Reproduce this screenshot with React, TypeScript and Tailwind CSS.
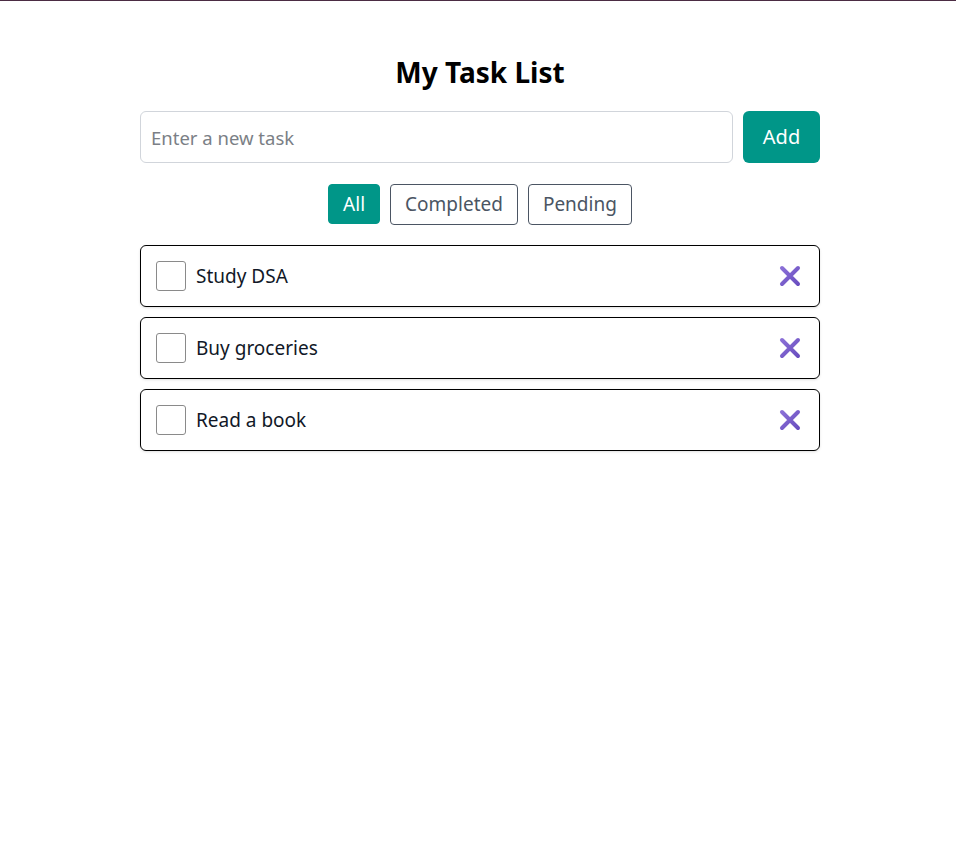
import { useState } from "react";

type Task = { id: number; text: string; done: boolean };

const initial: Task[] = [
  { id: 1, text: "Study DSA", done: false },
  { id: 2, text: "Buy groceries", done: false },
  { id: 3, text: "Read a book", done: false },
];

function CrossIcon() {
  return (
    <svg width="22" height="22" viewBox="0 0 22 22">
      <defs>
        <linearGradient id="xg" x1="0" y1="0" x2="1" y2="1">
          <stop offset="0" stopColor="#8a6fd6" />
          <stop offset="1" stopColor="#6a4fc0" />
        </linearGradient>
      </defs>
      <path d="M3 3 L19 19 M19 3 L3 19" stroke="url(#xg)" strokeWidth="4" strokeLinecap="round" />
    </svg>
  );
}

export default function App() {
  const [tasks, setTasks] = useState<Task[]>(initial);
  const [filter, setFilter] = useState("All");
  const [text, setText] = useState("");

  const shown = tasks.filter((t) =>
    filter === "All" ? true : filter === "Completed" ? t.done : !t.done
  );

  const add = () => {
    if (!text.trim()) return;
    setTasks([...tasks, { id: Date.now(), text: text.trim(), done: false }]);
    setText("");
  };

  return (
    <div className="min-h-screen bg-white text-[#111827]" style={{ fontFamily: '"Noto Sans", "Open Sans", sans-serif' }}>
      <div className="h-px bg-[#4b2c43]" />
      <div className="pl-[4px]">
        <div className="mx-auto w-[680px] pt-[53px]">
          <h1 className="text-center text-[28px] font-bold leading-[36px] text-black">My Task List</h1>

          <div className="mt-[21px] flex gap-[10px]">
            <input
              value={text}
              onChange={(e) => setText(e.target.value)}
              placeholder="Enter a new task"
              className="h-[52px] flex-1 rounded-md border border-[#d1d5db] px-[10px] text-[18.5px] outline-none placeholder:text-[#7b7f86]"
            />
            <button onClick={add} className="h-[52px] w-[77px] rounded-md bg-[#009688] text-[20px] text-white">
              Add
            </button>
          </div>

          <div className="mt-[21px] flex justify-center gap-[10px]">
            {["All", "Completed", "Pending"].map((f) => (
              <button
                key={f}
                onClick={() => setFilter(f)}
                className={
                  filter === f
                    ? "h-[40px] rounded-[4px] border border-[#009688] bg-[#009688] px-[14px] text-[19px] text-white"
                    : "h-[41px] rounded-[4px] border border-[#4b5563] bg-white px-[14px] text-[19px] text-[#4b5563]"
                }
              >
                {f}
              </button>
            ))}
          </div>

          <ul className="mt-[20px] flex flex-col gap-[10px]">
            {shown.map((t) => (
              <li
                key={t.id}
                className="flex h-[62px] items-center rounded-md border border-black bg-white px-[15px] shadow-sm"
              >
                <input
                  type="checkbox"
                  checked={t.done}
                  onChange={() => setTasks(tasks.map((x) => (x.id === t.id ? { ...x, done: !x.done } : x)))}
                  className="h-[30px] w-[30px] appearance-none rounded-[3px] border border-[#8a8a8a] bg-white"
                />
                <span className={t.done ? "ml-[10px] flex-1 text-[19px] line-through text-gray-400" : "ml-[10px] flex-1 text-[19px]"}>
                  {t.text}
                </span>
                <button onClick={() => setTasks(tasks.filter((x) => x.id !== t.id))} className="mr-[3px]">
                  <CrossIcon />
                </button>
              </li>
            ))}
          </ul>
        </div>
      </div>
    </div>
  );
}
